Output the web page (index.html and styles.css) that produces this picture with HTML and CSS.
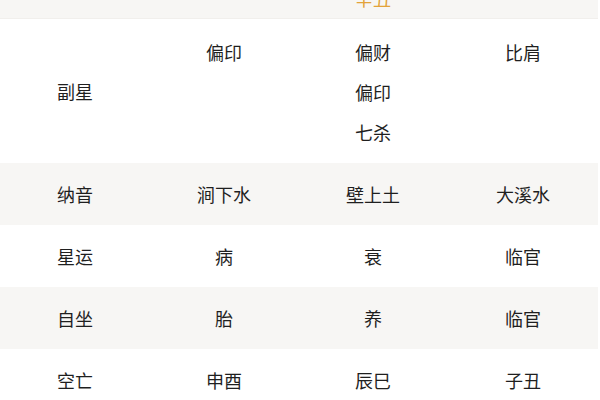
FILE: index.html
```html
<!DOCTYPE html>
<html lang="zh">
<head>
<meta charset="utf-8">
<link rel="stylesheet" href="styles.css">
</head>
<body>
<div class="table">
  <div class="row head gray">
    <div class="cell"></div>
    <div class="cell"></div>
    <div class="cell hl">辛丑</div>
    <div class="cell"></div>
  </div>
  <div class="row multi">
    <div class="cell label">副星</div>
    <div class="cell stack"><span>偏印</span></div>
    <div class="cell stack"><span>偏财</span><span>偏印</span><span>七杀</span></div>
    <div class="cell stack"><span>比肩</span></div>
  </div>
  <div class="row gray">
    <div class="cell">纳音</div>
    <div class="cell">涧下水</div>
    <div class="cell">壁上土</div>
    <div class="cell">大溪水</div>
  </div>
  <div class="row">
    <div class="cell">星运</div>
    <div class="cell">病</div>
    <div class="cell">衰</div>
    <div class="cell">临官</div>
  </div>
  <div class="row gray">
    <div class="cell">自坐</div>
    <div class="cell">胎</div>
    <div class="cell">养</div>
    <div class="cell">临官</div>
  </div>
  <div class="row">
    <div class="cell">空亡</div>
    <div class="cell">申酉</div>
    <div class="cell">辰巳</div>
    <div class="cell">子丑</div>
  </div>
</div>
</body>
</html>
```
FILE: styles.css
```css
html, body {
  margin: 0;
  padding: 0;
  background: #ffffff;
  overflow: hidden;
}
body {
  font-family: "Noto Sans CJK SC", "Noto Sans", sans-serif;
  font-size: 18px;
  font-weight: 400;
  color: #1f1f1f;
}
.table {
  display: flex;
  flex-direction: column;
  width: 598px;
}
.row {
  display: grid;
  grid-template-columns: 150px 148px 150px 150px;
  height: 62px;
  align-items: center;
}
.row.gray {
  background: #f7f6f4;
}
.row.head {
  margin-top: -22px;
  border-bottom: 1px solid #f1efec;
  height: 40px;
}
.cell {
  text-align: center;
  line-height: 24px;
}
.hl {
  color: #e3a33a;
}
.row.multi {
  height: 144px;
  align-items: stretch;
}
.row.multi .label {
  align-self: center;
}
.stack {
  display: flex;
  flex-direction: column;
  align-items: center;
  padding-top: 13px;
}
.stack span {
  line-height: 40px;
  height: 40px;
}
```
